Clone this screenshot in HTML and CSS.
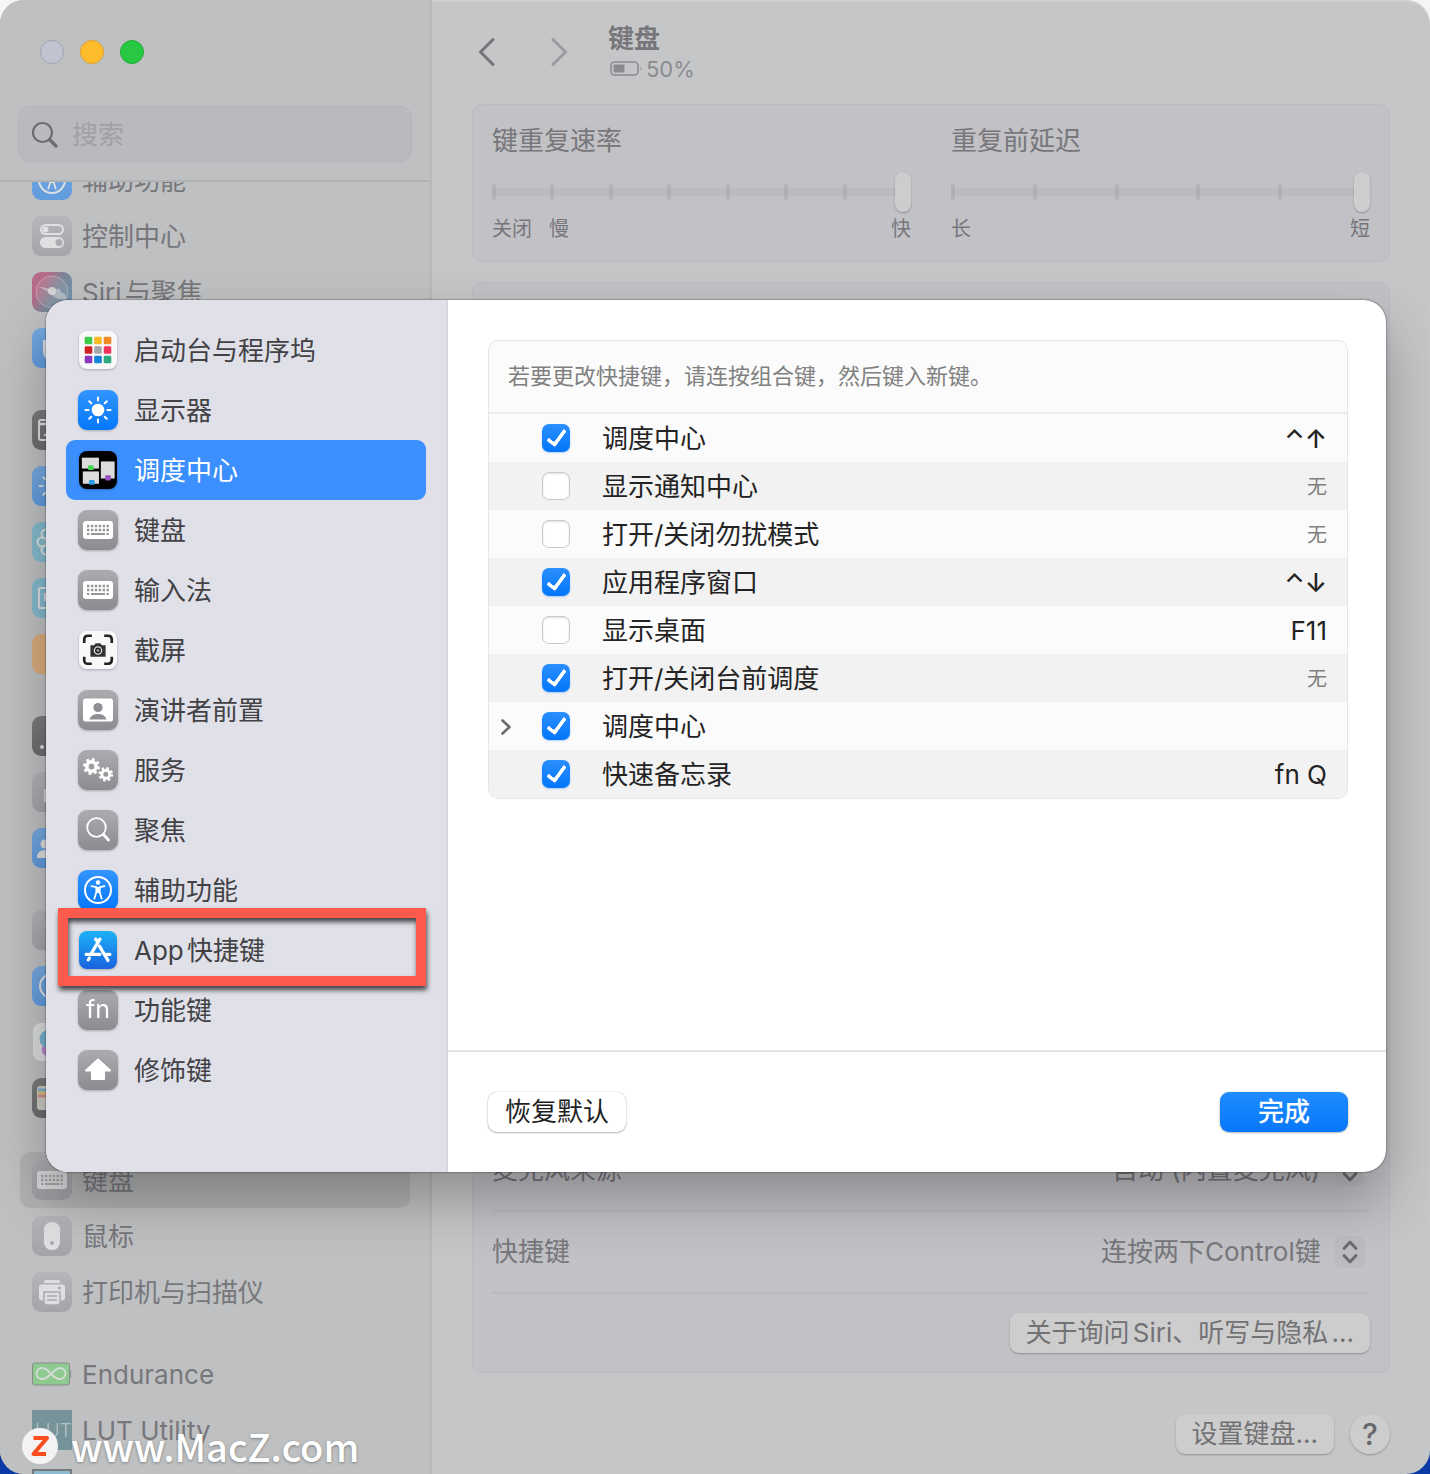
FILE: index.html
```html
<!DOCTYPE html>
<html lang="zh-CN">
<head>
  <meta charset="UTF-8" />
  <meta name="viewport" content="width=device-width, initial-scale=1" />
  <title>键盘</title>
  <link rel="stylesheet" href="styles.css">
</head>
<body>
  <svg class="defs" aria-hidden="true">
    <symbol id="i-keyboard" viewBox="0 0 40 40">
      <rect x="5" y="11" width="30" height="18" rx="3" fill="#fff"/>
      <path d="M9 16h22M9 20h22" stroke="#96969b" stroke-width="2.4" stroke-dasharray="2.4 1.5"/>
      <path d="M9 24h2.4M13 24h14M28.500 24h2.400" stroke="#96969b" stroke-width="2.2"/>
    </symbol>
    <symbol id="i-access" viewBox="0 0 40 40">
      <circle cx="20" cy="20" r="13" fill="none" stroke="#fff" stroke-width="2"/>
      <circle cx="20" cy="12.500" r="2.200" fill="#fff"/>
      <path d="M13.500 16.200l4.800 1v5l-2 6.500M26.500 16.200l-4.800 1v5l2 6.500" fill="none" stroke="#fff" stroke-width="1.800" stroke-linecap="round" stroke-linejoin="round"/>
      <path d="M18 17h4v6h-4z" fill="#fff"/>
    </symbol>
    <symbol id="i-sun" viewBox="0 0 40 40">
      <circle cx="20" cy="20" r="6.300" fill="#fff"/>
      <path d="M20 7.500v3M20 29.500v3M7.500 20h3M29.500 20h3M11.200 11.200l2.100 2.100M26.700 26.700l2.100 2.100M11.200 28.800l2.100-2.100M26.700 13.300l2.100-2.100" stroke="#fff" stroke-width="2" stroke-linecap="round"/>
    </symbol>
    <symbol id="i-updown" viewBox="0 0 30 32">
      <path d="M9 12.500l6-6.500 6 6.500M9 19.500l6 6.500 6-6.500" fill="none" stroke="currentColor" stroke-width="2.800" stroke-linecap="round" stroke-linejoin="round"/>
    </symbol>
  </svg>

  <div class="window">
    <aside class="sidebar">
      <div class="lights">
        <button class="light" aria-label="关闭"></button>
        <button class="light light-min" aria-label="最小化"></button>
        <button class="light light-max" aria-label="缩放"></button>
      </div>
      <label class="search">
        <svg width="28" height="28" viewBox="0 0 28 28" fill="none" stroke="#6c6c70" stroke-linecap="round"><circle cx="11.500" cy="11.500" r="9.500" stroke-width="2.200"/><path d="M18.500 18.500l6.500 6.500" stroke-width="3.200"/></svg>
        <input type="search" placeholder="搜索" aria-label="搜索">
      </label>
      <nav class="side-scroll">
        <div class="side-list">
          <div class="side-group">
            <a href="#" class="side-item"><svg class="icon blue"><use href="#i-access"/></svg>辅助功能</a>
            <a href="#" class="side-item"><svg class="icon gray" viewBox="0 0 40 40"><rect x="9" y="9" width="22" height="9" rx="4.500" fill="none" stroke="#fff" stroke-width="2"/><circle cx="13.500" cy="13.500" r="3" fill="#fff"/><rect x="8" y="21" width="24" height="11" rx="5.500" fill="#fff"/><circle cx="27" cy="26.500" r="3.500" fill="#96969b"/></svg>控制中心</a>
            <a href="#" class="side-item"><svg class="icon siri" viewBox="0 0 40 40"><circle cx="20" cy="20" r="16" fill="#fff" fill-opacity=".12" stroke="#fff" stroke-opacity=".4"/><path d="M7 15q8 0 13 4 8-5 9 1 6 2 5 7-8 1-13-3-5-5-14-9z" fill="#fff" opacity=".5"/><circle cx="20" cy="19" r="4" fill="#fff" opacity=".8"/></svg>Siri与聚焦</a>
            <a href="#" class="side-item" aria-label="隐私与安全性"><svg class="icon blue" viewBox="0 0 40 40"><path d="M11 12v10q0 11 9 11t9-11V10" fill="#fff"/></svg></a>
          </div>
          <div class="side-group">
            <a href="#" class="side-item" aria-label="桌面与程序坞"><svg class="icon black" viewBox="0 0 40 40"><rect x="7" y="10" width="26" height="20" rx="2" fill="none" stroke="#fff" stroke-width="2"/><path d="M8 14h24M12 25h16" stroke="#fff" stroke-width="2.500"/></svg></a>
            <a href="#" class="side-item" aria-label="显示器"><svg class="icon blue"><use href="#i-sun"/></svg></a>
            <a href="#" class="side-item" aria-label="墙纸"><svg class="icon cyan" viewBox="0 0 40 40" fill="none" stroke="#fff" stroke-width="2"><circle cx="20" cy="20" r="4"/><circle cx="10" cy="20" r="4.500"/><circle cx="14" cy="12" r="4.500"/><circle cx="14" cy="28" r="4.500"/><circle cx="26" cy="12" r="4.500"/><circle cx="26" cy="28" r="4.500"/></svg></a>
            <a href="#" class="side-item" aria-label="屏幕保护程序"><svg class="icon cyan" viewBox="0 0 40 40" fill="none" stroke="#fff" stroke-width="2"><rect x="7" y="10" width="26" height="20" rx="1"/><path d="M13 15v8"/></svg></a>
            <a href="#" class="side-item" aria-label="节能"><svg class="icon orange" viewBox="0 0 40 40"><circle cx="21" cy="16" r="7" fill="#fff"/><path d="M17 25h6v6h-6z" fill="#fff"/></svg></a>
          </div>
          <div class="side-group">
            <a href="#" class="side-item" aria-label="锁定屏幕"><svg class="icon black" viewBox="0 0 40 40"><path d="M10 31h20" stroke="#fff" stroke-width="4" stroke-linecap="round" stroke-dasharray="0 7"/><rect x="16" y="14" width="10" height="9" fill="#fff"/></svg></a>
            <a href="#" class="side-item" aria-label="登录密码"><svg class="icon gray" viewBox="0 0 40 40"><rect x="12" y="17" width="17" height="13" fill="#fff"/></svg></a>
            <a href="#" class="side-item" aria-label="用户与群组"><svg class="icon blue" viewBox="0 0 40 40" fill="#fff"><circle cx="13" cy="16" r="4.500"/><path d="M5 30q0-8 8-8t8 8z"/><circle cx="26" cy="15" r="5"/></svg></a>
          </div>
          <div class="side-group">
            <a href="#" class="side-item" aria-label="密码"><svg class="icon gray" viewBox="0 0 40 40"><circle cx="21" cy="14" r="6" fill="none" stroke="#fff" stroke-width="3"/><path d="M21 20v12" stroke="#fff" stroke-width="3"/></svg></a>
            <a href="#" class="side-item" aria-label="互联网账户"><svg class="icon blue" viewBox="0 0 40 40"><circle cx="20" cy="20" r="12" fill="none" stroke="#fff" stroke-width="2"/></svg></a>
            <a href="#" class="side-item" aria-label="Game Center"><svg class="icon white" viewBox="0 0 40 40"><circle cx="16" cy="28" r="7" fill="#b44fd8"/><circle cx="17" cy="17" r="10" fill="#2fa4d8"/></svg></a>
            <a href="#" class="side-item" aria-label="钱包"><svg class="icon black" viewBox="0 0 40 40"><rect x="5" y="8" width="30" height="24" rx="3" fill="#ddd5c3"/><path d="M6 12h28" stroke="#3ba5d8" stroke-width="3"/><path d="M6 15h28" stroke="#f0b73c" stroke-width="3"/><path d="M6 18h28" stroke="#e66757" stroke-width="3"/></svg></a>
          </div>
          <div class="side-group">
            <a href="#" class="side-item current"><svg class="icon gray"><use href="#i-keyboard"/></svg>键盘</a>
            <a href="#" class="side-item"><svg class="icon gray" viewBox="0 0 40 40"><rect x="12" y="6" width="16" height="28" rx="7.500" fill="#fff"/><circle cx="20" cy="27" r="2" fill="#96969b"/></svg>鼠标</a>
            <a href="#" class="side-item"><svg class="icon gray" viewBox="0 0 40 40"><path d="M12 11V9.500Q12 8 14 8h12q2 0 2 1.500V11z" fill="#fff"/><rect x="7" y="12.500" width="26" height="16" rx="3" fill="#fff"/><circle cx="27.500" cy="16" r="1.500" fill="#96969b"/><path d="M12 20h16v10q0 3-3 3H15q-3 0-3-3z" fill="#fff" stroke="#96969b" stroke-width="1.500"/><path d="M15 24h10M15 28h10" stroke="#96969b" stroke-width="1.500"/></svg>打印机与扫描仪</a>
          </div>
          <div class="side-group">
            <a href="#" class="side-item"><svg class="icon square" viewBox="0 0 40 40"><rect x=".5" y="9" width="37" height="22" rx="2" fill="#5fd35f" stroke="#555"/><path d="M38.500 16v8" stroke="#777" stroke-width="1.500"/><path d="M19 20c-4-5-6-6-9-6a5.500 5.500 0 0 0 0 11c3 0 5-1 9-5s6-6 9-6a5.500 5.500 0 0 1 0 11c-3 0-5-1-9-5z" fill="none" stroke="#eafbe6" stroke-width="1.800"/></svg>Endurance</a>
            <a href="#" class="side-item"><svg class="icon square" viewBox="0 0 40 40"><rect width="40" height="40" fill="#2c666e"/><text x="3" y="27" font-size="19" font-family="Inter, sans-serif" font-weight="300" fill="#a9c5cb">LUT</text></svg>LUT Utility</a>
            <a href="#" class="side-item" aria-label="显示"><svg class="icon square" viewBox="0 0 40 40"><rect x="1" y="4" width="38" height="30" fill="#59b3df" stroke="#333" stroke-width="2"/></svg></a>
          </div>
        </div>
      </nav>
    </aside>

    <main class="main">
      <header class="toolbar">
        <button class="nav-btn" aria-label="后退"><svg width="18" height="30" viewBox="0 0 18 30"><path d="M15 2.500L2.500 15 15 27.500"/></svg></button>
        <button class="nav-btn next" aria-label="前进"><svg width="18" height="30" viewBox="0 0 18 30"><path d="M3 2.500L15.500 15 3 27.500"/></svg></button>
        <div>
          <h1>键盘</h1>
          <p class="battery"><svg width="34" height="16" viewBox="0 0 34 16"><rect x="1" y="1" width="27" height="13" rx="3.500" fill="none" stroke="currentColor" stroke-width="1.500"/><rect x="3.500" y="3.500" width="11" height="8" rx="1" fill="currentColor"/><path d="M30.500 5.500q2 2 0 4z" fill="currentColor"/></svg>50%</p>
        </div>
      </header>

      <section class="panel rates">
        <div class="rate">
          <label for="repeatRate">键重复速率</label>
          <div class="slider">
            <div class="ticks"><i></i><i></i><i></i><i></i><i></i><i></i><i></i><i></i></div>
            <input type="range" id="repeatRate" min="0" max="7" value="7">
          </div>
          <div class="scale"><span>关闭</span><span>慢</span><span class="end">快</span></div>
        </div>
        <div class="rate">
          <label for="repeatDelay">重复前延迟</label>
          <div class="slider">
            <div class="ticks"><i></i><i></i><i></i><i></i><i></i><i></i></div>
            <input type="range" id="repeatDelay" min="0" max="5" value="5">
          </div>
          <div class="scale"><span>长</span><span class="end">短</span></div>
        </div>
      </section>

      <section class="panel dictation">
        <div class="row">
          <label for="mic">麦克风来源</label>
          <select id="mic"><option>自动 (内置麦克风)</option></select>
          <svg class="stepper"><use href="#i-updown"/></svg>
        </div>
        <div class="row">
          <label for="shortcut">快捷键</label>
          <select id="shortcut"><option>连按两下Control键</option></select>
          <svg class="stepper"><use href="#i-updown"/></svg>
        </div>
        <div class="row">
          <button class="btn dim">关于询问Siri、听写与隐私...</button>
        </div>
      </section>

      <footer class="main-footer">
        <button class="btn dim">设置键盘...</button>
        <button class="help" aria-label="帮助">?</button>
      </footer>
    </main>

    <div class="sheet" role="dialog" aria-label="键盘快捷键">
      <nav class="sheet-nav">
        <a href="#" class="sheet-item"><svg class="icon white" viewBox="0 0 40 40"><g><rect x="6" y="6" width="8" height="8" rx="1.500" fill="#3ecb4b"/><rect x="16" y="6" width="8" height="8" rx="1.500" fill="#f7b825"/><rect x="26" y="6" width="8" height="8" rx="1.500" fill="#f18a23"/><rect x="6" y="16" width="8" height="8" rx="1.500" fill="#cf1f25"/><rect x="16" y="16" width="8" height="8" rx="1.500" fill="#a3a5a8"/><rect x="26" y="16" width="8" height="8" rx="1.500" fill="#f0325c"/><rect x="6" y="26" width="8" height="8" rx="1.500" fill="#8c35bd"/><rect x="16" y="26" width="8" height="8" rx="1.500" fill="#1482d8"/><rect x="26" y="26" width="8" height="8" rx="1.500" fill="#2cab83"/></g></svg>启动台与程序坞</a>
        <a href="#" class="sheet-item"><svg class="icon blue"><use href="#i-sun"/></svg>显示器</a>
        <a href="#" class="sheet-item selected"><svg class="icon mission" viewBox="0 0 40 40"><g fill="#dcdcdc"><rect x="3" y="7" width="18" height="11.500"/><rect x="4" y="21.500" width="17" height="13"/><rect x="23" y="11" width="14.500" height="18"/></g><rect x="9.500" y="15" width="6" height="5" rx="1" fill="#43d950"/><rect x="10.500" y="30.500" width="6" height="5" rx="1" fill="#2e9de6"/><rect x="27.500" y="25.500" width="6" height="5.500" rx="1" fill="#9a4fc4"/></svg>调度中心</a>
        <a href="#" class="sheet-item"><svg class="icon gray"><use href="#i-keyboard"/></svg>键盘</a>
        <a href="#" class="sheet-item"><svg class="icon gray"><use href="#i-keyboard"/></svg>输入法</a>
        <a href="#" class="sheet-item"><svg class="icon white" viewBox="0 0 40 40"><path d="M5.500 12.500V9q0-4 4-4h4M26.500 5h4q4 0 4 4v3.500M34.500 27v3.500q0 4-4 4h-4M13.500 34.500h-4q-4 0-4-4V27" fill="none" stroke="#222" stroke-width="2.800"/><path d="M12 15h4l1.500-2h5l1.500 2h4v12H12z" fill="#333"/><circle cx="20" cy="20.500" r="3.800" fill="#222" stroke="#ddd" stroke-width="1.400"/><circle cx="20" cy="20.500" r="1.500" fill="#999"/></svg>截屏</a>
        <a href="#" class="sheet-item"><svg class="icon gray" viewBox="0 0 40 40"><rect x="5" y="8.500" width="30" height="23" rx="2.500" fill="#fff"/><circle cx="20" cy="17.500" r="4.600" fill="#8e8e92"/><path d="M11.500 29.500q1.500-5.500 8.500-5.500t8.500 5.500z" fill="#8e8e92"/></svg>演讲者前置</a>
        <a href="#" class="sheet-item"><svg class="icon gray" viewBox="0 0 40 40" fill="none" stroke="#fff"><circle cx="13.500" cy="16.500" r="4.700" stroke-width="3.600"/><circle cx="13.500" cy="16.500" r="7" stroke-width="3" stroke-dasharray="2.750 2.750"/><circle cx="27.800" cy="24.300" r="4" stroke-width="3"/><circle cx="27.800" cy="24.300" r="6" stroke-width="2.600" stroke-dasharray="2.356 2.356"/></svg>服务</a>
        <a href="#" class="sheet-item"><svg class="icon gray" viewBox="0 0 40 40" fill="none" stroke="#fff" stroke-linecap="round"><circle cx="18.500" cy="17.500" r="9.300" stroke-width="1.800"/><path d="M25.500 24.500l5 5.500" stroke-width="2.800"/></svg>聚焦</a>
        <a href="#" class="sheet-item"><svg class="icon blue"><use href="#i-access"/></svg>辅助功能</a>
        <a href="#" class="sheet-item marked"><svg class="icon store" viewBox="0 0 40 40" fill="none" stroke="#fff" stroke-width="3.400" stroke-linecap="round"><path d="M22 8.500L13 23.500M17.500 8.500L20 12.300M21.500 16L30.500 31M7.500 24.500h14.500M28.500 24.500H32.500M11 28.500L9.700 30.500"/></svg>App快捷键</a>
        <a href="#" class="sheet-item"><span class="icon gray fn">fn</span>功能键</a>
        <a href="#" class="sheet-item"><svg class="icon gray" viewBox="0 0 40 40"><path d="M20 9.500L32 20.500H26V29H14V20.500H8z" fill="#fff" stroke="#fff" stroke-width="2" stroke-linejoin="round"/></svg>修饰键</a>
      </nav>

      <div class="sheet-main">
        <div class="shortcuts">
          <p class="hint">若要更改快捷键，请连按组合键，然后键入新键。</p>
          <table>
            <tr>
              <td class="fold"></td>
              <td class="check"><input type="checkbox" id="s1" checked></td>
              <td><label for="s1">调度中心</label></td>
              <td class="key arrows">⌃↑</td>
            </tr>
            <tr>
              <td class="fold"></td>
              <td class="check"><input type="checkbox" id="s2"></td>
              <td><label for="s2">显示通知中心</label></td>
              <td class="key none">无</td>
            </tr>
            <tr>
              <td class="fold"></td>
              <td class="check"><input type="checkbox" id="s3"></td>
              <td><label for="s3">打开/关闭勿扰模式</label></td>
              <td class="key none">无</td>
            </tr>
            <tr>
              <td class="fold"></td>
              <td class="check"><input type="checkbox" id="s4" checked></td>
              <td><label for="s4">应用程序窗口</label></td>
              <td class="key arrows">⌃↓</td>
            </tr>
            <tr>
              <td class="fold"></td>
              <td class="check"><input type="checkbox" id="s5"></td>
              <td><label for="s5">显示桌面</label></td>
              <td class="key">F11</td>
            </tr>
            <tr>
              <td class="fold"></td>
              <td class="check"><input type="checkbox" id="s6" checked></td>
              <td><label for="s6">打开/关闭台前调度</label></td>
              <td class="key none">无</td>
            </tr>
            <tr>
              <td class="fold"><button aria-label="展开"><svg width="12" height="18" viewBox="0 0 12 18"><path d="M2.500 2.500L9.500 9l-7 6.500" fill="none" stroke="#6b6b6b" stroke-width="2.600" stroke-linecap="round" stroke-linejoin="round"/></svg></button></td>
              <td class="check"><input type="checkbox" id="s7" checked></td>
              <td><label for="s7">调度中心</label></td>
              <td class="key"></td>
            </tr>
            <tr>
              <td class="fold"></td>
              <td class="check"><input type="checkbox" id="s8" checked></td>
              <td><label for="s8">快速备忘录</label></td>
              <td class="key">fn Q</td>
            </tr>
          </table>
        </div>
        <footer class="sheet-footer">
          <button class="btn">恢复默认</button>
          <button class="btn primary">完成</button>
        </footer>
      </div>
    </div>
  </div>

  <div class="watermark">
    <svg width="36" height="36" viewBox="0 0 36 36"><circle cx="18" cy="18" r="18" fill="#f4f2f2"/><path d="M11.500 10h13.500L11.500 26H24" fill="none" stroke="#fa4d1d" stroke-width="4" stroke-linejoin="round"/></svg>
    <span>www.MacZ.com</span>
  </div>
</body>
</html>
```

FILE: styles.css
```css
*,
*::before,
*::after {
  box-sizing: border-box;
}

body {
  margin: 0;
  font-family: Inter, "Noto Sans CJK SC", sans-serif;
  font-size: 26px;
  line-height: 32px;
  text-autospace: normal;
  background: linear-gradient(#f4f6f6 50%, #0b3aa6 50%);
}

h1, p {
  margin: 0;
}

a {
  color: inherit;
  text-decoration: none;
}

button, input, select {
  font: inherit;
  color: inherit;
  text-autospace: inherit;
}

button {
  border: none;
  padding: 0;
  background: none;
}

.defs {
  position: absolute;
  width: 0;
  height: 0;
}

.window {
  position: relative;
  display: flex;
  height: 100vh;
  min-height: 1200px;
  border-radius: 24px;
  overflow: hidden;
  background: #c5c6c8;
  box-shadow: inset 0 2px 1px #d0d1d2;
  color: #77777b;
}

/* icons */
.icon {
  flex: none;
  width: 40px;
  height: 40px;
  border-radius: 9px;
}

.icon.square {
  border-radius: 0;
}

.blue { background: linear-gradient(#3395ff, #0477fb); }
.gray { background: linear-gradient(#acacb0, #8b8b90); }
.black { background: linear-gradient(#3a3a3c, #1c1c1e); }
.cyan { background: #4cb8d8; }
.orange { background: #f59a3c; }
.siri { background: linear-gradient(120deg, rgba(190, 20, 80, 0.9) 25%, rgba(90, 80, 140, 0.6) 55%, rgba(40, 120, 190, 0.8)), #0c4a44; }
.store { background: linear-gradient(#1cb2f8, #1a62e0); }
.white, .mission, .store { border: 1px solid transparent; background-clip: padding-box; }
.white { background-color: #f8f8f9; }
.mission { background-color: #000; }

.sheet .icon {
  filter: drop-shadow(0 1px 1px rgba(0, 0, 0, 0.25));
}

.fn {
  color: #fff;
  font-size: 25px;
  line-height: 38px;
  text-align: center;
}

/* sidebar */
.sidebar {
  display: flex;
  flex-direction: column;
  width: 432px;
  flex: none;
  border-right: 2px solid #b7b8ba;
  background: #bec0c2;
}

.lights {
  display: flex;
  gap: 16px;
  padding: 40px 40px 42px;
}

.light {
  width: 24px;
  height: 24px;
  border-radius: 50%;
  border: 1px solid #a2a4ab;
  background: #c1c4ce;
}

.light-min {
  border-color: #e0a02a;
  background: #ffbd2e;
}

.light-max {
  border-color: #1fac34;
  background: #28c840;
}

.search {
  display: flex;
  align-items: center;
  gap: 13px;
  height: 56px;
  margin: 0 18px;
  padding: 2px 12px 0;
  border: 1px solid #b5b5b9;
  border-radius: 12px;
  background: #b9b9be;
}

.search svg {
  flex: none;
}

.search input {
  flex: 1;
  min-width: 0;
  padding: 0;
  border: none;
  background: none;
  outline: none;
}

.search input::placeholder {
  color: #a1a1a5;
}

.side-scroll {
  flex: 1;
  min-height: 0;
  margin-top: 18px;
  border-top: 2px solid #b1b2b4;
  overflow: hidden;
}

/* the list is scrolled half a row down */
.side-list {
  display: flex;
  flex-direction: column;
  gap: 26px;
  margin: -30px 20px 0;
}

.side-item {
  display: flex;
  align-items: center;
  gap: 10px;
  height: 56px;
  padding: 2px 12px 0;
  border-radius: 10px;
}

.side-item .icon,
.sheet-item .icon {
  margin-bottom: 2px;
}

.side-item .icon {
  opacity: 0.5;
}

.side-item.current {
  background: #b0b1b3;
}

/* main pane */
.main {
  flex: 1;
  min-width: 0;
  display: flex;
  flex-direction: column;
  padding: 0 40px 20px;
}

.toolbar {
  display: flex;
  align-items: center;
  height: 104px;
  padding-left: 6px;
}

.nav-btn {
  height: 30px;
  line-height: 0;
  margin-right: 54px;
}

.nav-btn.next {
  margin-right: 40px;
  opacity: 0.5;
}

.nav-btn path {
  fill: none;
  stroke: #747477;
  stroke-width: 3;
  stroke-linecap: round;
  stroke-linejoin: round;
}

h1 {
  font-size: 26px;
  line-height: 34px;
  font-weight: 700;
}

.battery {
  display: flex;
  align-items: center;
  gap: 2px;
  padding-left: 2px;
  font-size: 22px;
  line-height: 26px;
  color: #8b8b8f;
}

.panel {
  border: 1px solid #bcbcc0;
  border-radius: 10px;
  background: #c1c1c6;
}

.rates {
  display: flex;
  gap: 40px;
  padding: 20px 19px;
}

.rate {
  flex: 1;
}

.rate label {
  display: block;
}

.slider {
  display: grid;
  margin: 15px 0 5px;
}

.slider > * {
  grid-area: 1 / 1;
}

.ticks {
  display: flex;
  align-items: center;
  justify-content: space-between;
  padding-right: 6px;
}

.ticks i {
  width: 4px;
  height: 16px;
  border-radius: 2px;
  background: #b3b3b6;
}

input[type="range"] {
  appearance: none;
  width: 100%;
  height: 40px;
  margin: 0;
  background: linear-gradient(rgba(150, 150, 150, 0.15), rgba(150, 150, 150, 0.15)) center / 100% 8px no-repeat;
}

input[type="range"]::-webkit-slider-thumb {
  appearance: none;
  width: 16px;
  height: 40px;
  border-radius: 8px;
  background: #cdcdce;
  box-shadow: 0 1px 2px rgba(0, 0, 0, 0.25);
}

.scale {
  display: flex;
  gap: 17px;
  font-size: 20px;
  line-height: 24px;
}

.scale .end {
  margin-left: auto;
}

.dictation {
  flex: 1;
  display: flex;
  flex-direction: column;
  justify-content: flex-end;
  margin-top: 20px;
  padding: 0 19px;
}

.row {
  display: flex;
  align-items: center;
  justify-content: flex-end;
  gap: 14px;
  height: 82px;
  padding-right: 5px;
  border-bottom: 2px solid #b9b9be;
}

.row:last-child {
  height: 78px;
  padding-right: 0;
  border-bottom: none;
}

.row label {
  margin-right: auto;
}

.row select {
  appearance: none;
  padding: 0;
  border: none;
  background: none;
}

.stepper {
  width: 30px;
  height: 32px;
  border-radius: 7px;
  background: #bbbbc0;
  color: #6b6b6e;
}

.main-footer {
  display: flex;
  justify-content: flex-end;
  gap: 16px;
  margin-top: 41px;
}

.main-footer .btn {
  text-autospace: no-autospace;
}

.btn {
  height: 40px;
  padding: 0 17px;
  border-radius: 9px;
  background: #fff;
  color: #1f1f1f;
  box-shadow: 0 0 1px rgba(0, 0, 0, 0.35), 0 1px 2px rgba(0, 0, 0, 0.25);
}

.btn.dim {
  padding: 0 16px;
  background: #cdcdce;
  color: #727275;
  box-shadow: 0 1px 2px rgba(0, 0, 0, 0.25);
}

.btn.primary {
  min-width: 128px;
  background: linear-gradient(#1f8cff, #0877f8);
  color: #fff;
  font-weight: 500;
}

.help {
  width: 40px;
  height: 40px;
  border-radius: 50%;
  background: #cdcdce;
  box-shadow: 0 1px 2px rgba(0, 0, 0, 0.25);
  font-size: 30px;
  font-weight: 500;
  color: #68686b;
}

/* shortcuts sheet */
.sheet {
  position: absolute;
  top: 300px;
  right: 44px;
  bottom: 302px;
  left: 46px;
  display: flex;
  border-radius: 22px;
  background: #fff;
  box-shadow: 0 0 2px rgba(0, 0, 0, 0.7), 0 28px 56px rgba(0, 0, 0, 0.28);
}

.sheet-nav {
  width: 402px;
  flex: none;
  padding: 20px;
  border-right: 2px solid #d6d6dc;
  border-radius: 22px 0 0 22px;
  background: #e0e0e9;
  color: #424245;
}

.sheet-item {
  position: relative;
  display: flex;
  align-items: center;
  gap: 16px;
  height: 60px;
  padding: 2px 12px 0;
  border-radius: 9px;
}

.sheet-item.selected {
  background: #3b8ffe;
  color: #fff;
}

.sheet-item.marked::after {
  content: "";
  position: absolute;
  z-index: 1;
  inset: -12px 0 -6px -8px;
  border: 10px solid #fc5a4d;
  box-shadow: 1px 4px 5px rgba(0, 0, 0, 0.7), inset 1px 4px 5px rgba(0, 0, 0, 0.7);
}

.sheet-main {
  flex: 1;
  min-width: 0;
  display: flex;
  flex-direction: column;
  justify-content: space-between;
}

.shortcuts {
  margin: 40px 38px 0 40px;
  border: 1px solid #e6e6e6;
  border-radius: 10px;
  background: #fbfbfb;
  overflow: hidden;
}

.hint {
  padding: 19px 19px 20px;
  border-bottom: 2px solid #ececec;
  font-size: 22px;
  color: #808080;
}

table {
  width: 100%;
  border-collapse: collapse;
  color: #232323;
}

td {
  height: 48px;
  padding: 2px 0 0;
}

tr:nth-child(even) {
  background: #f2f2f2;
}

.fold {
  width: 53px;
  padding-left: 11px;
}

.fold button {
  display: block;
}

.fold svg {
  display: block;
}

.check {
  width: 60px;
  padding: 0;
}

.check input {
  appearance: none;
  display: block;
  width: 28px;
  height: 28px;
  margin: 0;
  border: 1px solid #c9c9c9;
  border-radius: 7px;
  background: #fff;
  box-shadow: inset 0 1px 2px rgba(0, 0, 0, 0.12);
}

.check input:checked {
  border: none;
  background: linear-gradient(#2b8fff, #0476fa);
  box-shadow: 0 1px 2px rgba(0, 110, 255, 0.3);
}

.check input:checked::before {
  content: "";
  display: block;
  width: 11px;
  height: 20px;
  margin: 2px 0 0 9px;
  border: solid #fff;
  border-width: 0 4px 4px 0;
  border-radius: 2px;
  transform: rotate(36deg);
}

.key {
  padding-right: 20px;
  text-align: right;
}

.key.arrows {
  font-weight: 500;
}

.key.none {
  font-size: 20px;
  color: #808080;
}

.sheet-footer {
  display: flex;
  justify-content: space-between;
  padding: 40px 38px 40px 40px;
  border-top: 2px solid #e3e3e3;
}

.watermark {
  position: absolute;
  left: 22px;
  bottom: 10px;
  display: flex;
  align-items: center;
  gap: 13px;
  font-family: "Noto Sans CJK SC", sans-serif;
  font-size: 38px;
  line-height: 36px;
  font-weight: 500;
  color: #fff;
  text-shadow: 0 1px 3px rgba(0, 0, 0, 0.35);
}
```
